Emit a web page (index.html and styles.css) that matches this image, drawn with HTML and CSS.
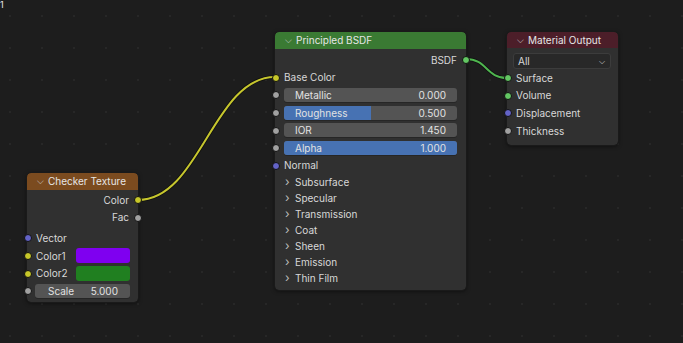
FILE: index.html
```html
<!DOCTYPE html>
<html lang="en">
<head>
    <meta charset="UTF-8">
    <title>Shader Editor</title>
    <link rel="stylesheet" href="styles.css">
</head>
<body>
    <div class="canvas">
        <span class="corner-mark">1</span>

        <svg class="links" width="683" height="343" viewBox="0 0 683 343">
            <path class="link-shadow" d="M138,200 C200,200 213,77 275,77" />
            <path class="link yellow" d="M138,200 C200,200 213,77 275,77" />
            <path class="link-shadow" d="M466,59 C487,59 486,78 507,78" />
            <path class="link green" d="M466,59 C487,59 486,78 507,78" />
        </svg>

        <!-- Principled BSDF -->
        <div class="node node-bsdf">
            <div class="node-header header-shader"><span class="chevron">&#x2335;</span>Principled BSDF</div>
            <div class="node-body">
                <div class="row out"><span>BSDF</span><i class="socket right s-green"></i></div>
                <div class="row"><i class="socket s-yellow"></i><span>Base Color</span></div>
                <div class="row"><i class="socket s-grey"></i>
                    <div class="field"><span>Metallic</span><span>0.000</span></div>
                </div>
                <div class="row"><i class="socket s-grey"></i>
                    <div class="field"><div class="fill" style="width: 50%"></div><span>Roughness</span><span>0.500</span></div>
                </div>
                <div class="row"><i class="socket s-grey"></i>
                    <div class="field"><span>IOR</span><span>1.450</span></div>
                </div>
                <div class="row"><i class="socket s-grey"></i>
                    <div class="field"><div class="fill" style="width: 100%"></div><span>Alpha</span><span>1.000</span></div>
                </div>
                <div class="row"><i class="socket s-purple"></i><span>Normal</span></div>
                <div class="panel"><span class="arrow">&#x203A;</span>Subsurface</div>
                <div class="panel"><span class="arrow">&#x203A;</span>Specular</div>
                <div class="panel"><span class="arrow">&#x203A;</span>Transmission</div>
                <div class="panel"><span class="arrow">&#x203A;</span>Coat</div>
                <div class="panel"><span class="arrow">&#x203A;</span>Sheen</div>
                <div class="panel"><span class="arrow">&#x203A;</span>Emission</div>
                <div class="panel"><span class="arrow">&#x203A;</span>Thin Film</div>
            </div>
        </div>

        <!-- Material Output -->
        <div class="node node-output">
            <div class="node-header header-output"><span class="chevron">&#x2335;</span>Material Output</div>
            <div class="node-body">
                <div class="dropdown"><span>All</span><span class="drop-arrow">&#x2335;</span></div>
                <div class="row"><i class="socket s-green"></i><span>Surface</span></div>
                <div class="row"><i class="socket s-green"></i><span>Volume</span></div>
                <div class="row"><i class="socket s-purple"></i><span>Displacement</span></div>
                <div class="row"><i class="socket s-grey"></i><span>Thickness</span></div>
            </div>
        </div>

        <!-- Checker Texture -->
        <div class="node node-checker">
            <div class="node-header header-texture"><span class="chevron">&#x2335;</span>Checker Texture</div>
            <div class="node-body">
                <div class="row out"><span>Color</span><i class="socket right s-yellow"></i></div>
                <div class="row out"><span>Fac</span><i class="socket right s-grey"></i></div>
                <div class="spacer"></div>
                <div class="row"><i class="socket s-purple"></i><span>Vector</span></div>
                <div class="row split"><i class="socket s-yellow"></i><span>Color1</span><div class="swatch swatch-purple"></div></div>
                <div class="row split"><i class="socket s-yellow"></i><span>Color2</span><div class="swatch swatch-green"></div></div>
                <div class="row"><i class="socket s-grey"></i>
                    <div class="field field-short"><span>Scale</span><span>5.000</span></div>
                </div>
            </div>
        </div>
    </div>
</body>
</html>
```

FILE: styles.css
```css
body {
    margin: 0;
    padding: 0;
    background-color: #1d1d1d;
    font-family: Inter, "DejaVu Sans", sans-serif;
    font-size: 10px;
    color: #d8d8d8;
}
.canvas {
    position: relative;
    width: 683px;
    height: 343px;
    overflow: hidden;
    background-color: #1d1d1d;
    background-image: radial-gradient(circle, #272727 0.8px, transparent 1.2px);
    background-size: 32px 32px;
    background-position: -6px 0;
}
.corner-mark {
    position: absolute;
    left: 0;
    top: 0;
    font-size: 9px;
    line-height: 10px;
    color: #e8e8e8;
}
.links {
    position: absolute;
    left: 0;
    top: 0;
}
.link-shadow {
    fill: none;
    stroke: rgba(0, 0, 0, 0.5);
    stroke-width: 3.5;
}
.link {
    fill: none;
    stroke-width: 2;
}
.link.yellow {
    stroke: #c6c62e;
}
.link.green {
    stroke: #4fb54f;
}

/* nodes */
.node {
    position: absolute;
    background-color: #303030;
    border-radius: 4px;
    box-shadow: 0 1px 4px rgba(0, 0, 0, 0.6);
    outline: 1px solid #1a1a1a;
}
.node-bsdf {
    left: 275px;
    top: 32px;
    width: 191px;
    height: 258px;
}
.node-output {
    left: 507px;
    top: 32px;
    width: 111px;
    height: 113px;
}
.node-checker {
    left: 27px;
    top: 173px;
    width: 111px;
    height: 129px;
}
.node-header {
    height: 17px;
    line-height: 17px;
    padding-left: 10px;
    color: #e6e6e6;
    border-radius: 4px 4px 0 0;
    white-space: nowrap;
}
.header-shader {
    background-color: #3a7a33;
}
.header-output {
    height: 16px;
    line-height: 16px;
    background-color: #4c1e29;
}
.header-texture {
    background-color: #7b4b1f;
}
.chevron {
    display: inline-block;
    width: 11px;
    font-size: 9px;
    position: relative;
    top: -1px;
    color: #d0d0d0;
}
.node-body {
    padding-top: 1px;
}
.node-bsdf .node-body {
    padding-top: 2px;
}
.row {
    position: relative;
    height: 17.6px;
    display: flex;
    align-items: center;
    padding: 0 9px;
    white-space: nowrap;
}
.row.out {
    justify-content: flex-end;
}
.row.split {
    justify-content: space-between;
    padding-right: 8px;
}
.spacer {
    height: 3px;
}
.socket {
    position: absolute;
    left: -3.5px;
    top: 50%;
    width: 6px;
    height: 6px;
    margin-top: -3.5px;
    border-radius: 50%;
    border: 0.5px solid #111;
}
.socket.right {
    left: auto;
    right: -3.5px;
}
.s-yellow { background-color: #c7c729; }
.s-grey { background-color: #a1a1a1; }
.s-purple { background-color: #6363c7; }
.s-green { background-color: #63c763; }

.field {
    position: relative;
    flex: 1;
    height: 14px;
    background-color: #545454;
    border-radius: 3px;
    display: flex;
    justify-content: space-between;
    align-items: center;
    padding: 0 11px;
    overflow: hidden;
    color: #e2e2e2;
    box-shadow: 0 1px 0 #262626;
}
.field span {
    position: relative;
}
.field .fill {
    position: absolute;
    left: 0;
    top: 0;
    bottom: 0;
    background-color: #4772b3;
}
.field-short {
    margin-left: -1px;
    margin-right: -1px;
    padding: 0 12px 0 13px;
}
.panel {
    height: 16px;
    line-height: 16px;
    padding-left: 10px;
    white-space: nowrap;
}
.arrow {
    display: inline-block;
    width: 10px;
    font-size: 12px;
    color: #bcbcbc;
}
.dropdown {
    margin: 4px 7px 0 6px;
    height: 14px;
    border: 1px solid #3c3c3c;
    border-radius: 3px;
    background-color: #282828;
    display: flex;
    justify-content: space-between;
    align-items: center;
    padding: 0 5px 0 4px;
}
.drop-arrow {
    font-size: 8px;
    color: #dcdcdc;
}
.swatch {
    width: 54px;
    height: 15px;
    border-radius: 3px;
}
.swatch-purple {
    background-color: #7f00f0;
}
.swatch-green {
    background-color: #207f20;
}
```
